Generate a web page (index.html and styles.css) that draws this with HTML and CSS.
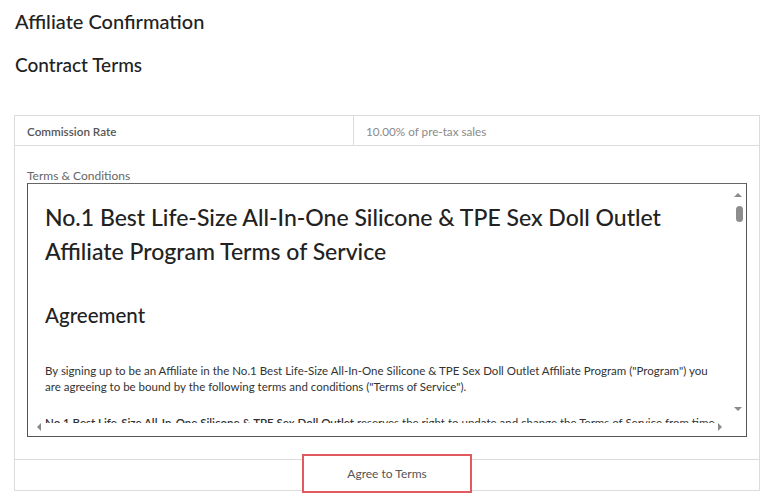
FILE: index.html
```html
<!DOCTYPE html>
<html lang="en">
<head>
<meta charset="utf-8">
<title>Affiliate Confirmation</title>
<link rel="stylesheet" href="styles.css">
</head>
<body>
  <h1 class="page-title">Affiliate Confirmation</h1>
  <h2 class="section-title">Contract Terms</h2>

  <div class="card">
    <div class="row rate-row">
      <div class="cell cell-label">Commission Rate</div>
      <div class="cell cell-value">10.00% of pre-tax sales</div>
    </div>

    <div class="row terms-row">
      <div class="terms-label">Terms &amp; Conditions</div>
      <div class="terms-frame">
        <div class="terms-view">
          <div class="doc">
            <h3 class="doc-title">No.1 Best Life-Size All-In-One Silicone &amp; TPE Sex Doll Outlet Affiliate Program Terms of Service</h3>
            <h4 class="doc-heading">Agreement</h4>
            <p class="doc-text">By signing up to be an Affiliate in the No.1 Best Life-Size All-In-One Silicone &amp; TPE Sex Doll Outlet Affiliate Program ("Program") you are agreeing to be bound by the following terms and conditions ("Terms of Service").</p>
            <p class="doc-text"><strong>No.1 Best Life-Size All-In-One Silicone &amp; TPE Sex Doll Outlet</strong> reserves the right to update and change the Terms of Service from time to time without notice.</p>
          </div>
        </div>
        <span class="sb-arrow sb-up"></span>
        <span class="sb-thumb"></span>
        <span class="sb-arrow sb-down"></span>
        <span class="sb-arrow sb-left"></span>
        <span class="sb-arrow sb-right"></span>
      </div>
    </div>

    <div class="row action-row">
      <button class="agree-btn" type="button">Agree to Terms</button>
    </div>
  </div>
</body>
</html>
```

FILE: styles.css
```css
* { box-sizing: border-box; }

html, body {
  margin: 0;
  background: #fff;
}

body {
  padding: 0 14px 20px 14px;
  font-family: "Lato", "Open Sans", sans-serif;
  color: #222;
}

.page-title {
  margin: 0;
  padding: 9px 0 0 1px;
  font-size: 20px;
  font-weight: 500;
  line-height: 24px;
  color: #222;
}

.section-title {
  margin: 0;
  padding: 20px 0 0 1px;
  font-size: 19px;
  font-weight: 500;
  line-height: 24px;
  color: #222;
}

.card {
  margin-top: 38px;
  width: 746px;
  border: 1px solid #dcdcdc;
}

.row {
  border-bottom: 1px solid #dcdcdc;
}

.row:last-child { border-bottom: 0; }

.rate-row {
  display: flex;
  height: 30px;
}

.cell {
  display: flex;
  align-items: center;
  padding-left: 12px;
  font-size: 11.7px;
}

.cell-label {
  width: 339px;
  border-right: 1px solid #dcdcdc;
  color: #555;
  font-weight: 600;
}

.cell-value {
  flex: 1;
  color: #8a8a8a;
}

.terms-row {
  padding: 23px 12px 22px 12px;
}

.terms-label {
  font-size: 12px;
  line-height: 14px;
  color: #666;
}

.terms-frame {
  position: relative;
  height: 254px;
  border: 1px solid #555;
  border-top-color: #666;
}

.terms-view {
  height: 239px;
  width: 704px;
  overflow: hidden;
}

.doc {
  width: 690px;
  padding: 16px 0 0 17px;
  color: #222;
}

.doc-title {
  margin: 0;
  font-size: 23px;
  font-weight: 500;
  line-height: 34px;
}

.doc-heading {
  margin: 32px 0 0 0;
  font-size: 20.5px;
  font-weight: 500;
  line-height: 30px;
}

.doc-text {
  margin: 33px 0 0 0;
  font-size: 11.5px;
  line-height: 16px;
  color: #333;
}

.doc-text + .doc-text { margin-top: 20px; }

.doc-text strong { font-weight: 600; }

/* scrollbar parts drawn over the frame */
.sb-arrow {
  position: absolute;
  width: 0;
  height: 0;
  border-style: solid;
  border-color: transparent;
}

.sb-up {
  right: 4px;
  top: 9px;
  border-width: 0 4px 4px 4px;
  border-bottom-color: #8a8a8a;
}

.sb-down {
  right: 4px;
  top: 223px;
  border-width: 4px 4px 0 4px;
  border-top-color: #8a8a8a;
}

.sb-left {
  left: 9px;
  top: 239px;
  border-width: 4px 4px 4px 0;
  border-right-color: #8a8a8a;
}

.sb-right {
  left: 690px;
  top: 239px;
  border-width: 4px 0 4px 4px;
  border-left-color: #8a8a8a;
}

.sb-thumb {
  position: absolute;
  right: 3px;
  top: 22px;
  width: 7px;
  height: 16px;
  border-radius: 4px;
  background: #8d8d8d;
}

.action-row {
  display: flex;
  justify-content: center;
  align-items: flex-start;
  height: 30px;
}

.agree-btn {
  position: relative;
  z-index: 1;
  flex: none;
  margin: -6px 0 -3px 0;
  width: 170px;
  height: 39px;
  padding: 0;
  border: 2px solid #e05a5f;
  background: #fff;
  font-family: "Lato", "Open Sans", sans-serif;
  font-size: 12px;
  color: #555;
  cursor: pointer;
}
```
